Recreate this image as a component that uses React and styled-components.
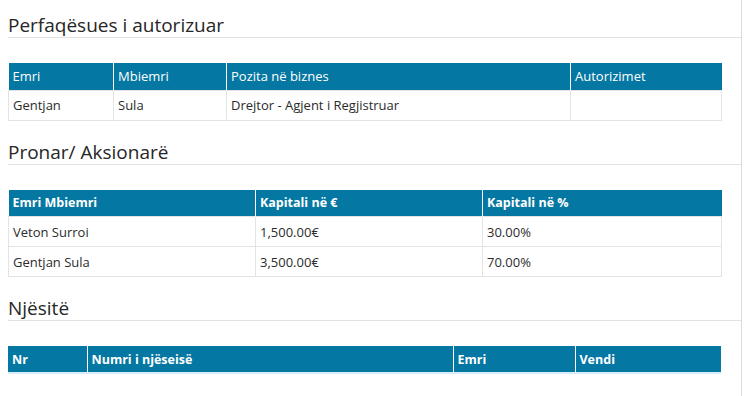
import React from 'react';
import styled, { createGlobalStyle } from 'styled-components';

const GlobalStyle = createGlobalStyle`
    html, body {
        margin: 0;
        padding: 0;
        background: #ffffff;
    }
    body {
        font-family: "Open Sans", "Noto Sans", sans-serif;
        color: #333333;
    }
`

const Page = styled.div`
    box-sizing: border-box;
    width: 742px;
    min-height: 100vh;
    padding: 13px 0 0 8px;
    border-right: 1px solid #dcdcdc;
`

const Section = styled.section`
    margin-bottom: 19px;
`

const Title = styled.h3`
    box-sizing: border-box;
    height: 25px;
    margin: 0 0 25px 0;
    font-size: 19px;
    font-weight: 400;
    line-height: 24px;
    color: #262626;
    border-bottom: 1px solid #e2e2e2;
`

const Table = styled.table`
    width: 713px;
    border-collapse: collapse;
    table-layout: fixed;
    font-size: 13px;
`

const HeadRow = styled.tr`
    background: #0477a2;
    border-bottom: ${p => (p.$underline ? '2px solid #d9eef8' : 'none')};
`

const Th = styled.th`
    height: 27px;
    padding: 0 4px;
    text-align: left;
    color: #ffffff;
    font-size: ${p => (p.$bold ? '12.5px' : '13px')};
    font-weight: ${p => (p.$bold ? 700 : 400)};
    border-right: 1px solid #ffffff;
    box-sizing: border-box;

    &:last-child {
        border-right: none;
    }
`

const Td = styled.td`
    height: 30px;
    padding: 0 4px;
    border: 1px solid #e3e3e3;
    color: #2b2b2b;
    box-sizing: border-box;
`

const sections = [
    {
        title: 'Perfaqësues i autorizuar',
        bold: false,
        cols: [
            ['Emri', 105],
            ['Mbiemri', 113],
            ['Pozita në biznes', 344],
            ['Autorizimet', 151],
        ],
        rows: [['Gentjan', 'Sula', 'Drejtor - Agjent i Regjistruar', '']],
    },
    {
        title: 'Pronar/ Aksionarë',
        bold: true,
        cols: [
            ['Emri Mbiemri', 247],
            ['Kapitali në €', 227],
            ['Kapitali në %', 239],
        ],
        rows: [
            ['Veton Surroi', '1,500.00€', '30.00%'],
            ['Gentjan Sula', '3,500.00€', '70.00%'],
        ],
    },
    {
        title: 'Njësitë',
        bold: true,
        underline: true,
        cols: [
            ['Nr', 79],
            ['Numri i njëseisë', 366],
            ['Emri', 122],
            ['Vendi', 146],
        ],
        rows: [],
    },
]

const App = () => (
    <Page>
        <GlobalStyle />
        {sections.map(({ title, bold, underline, cols, rows }) => (
            <Section key={title}>
                <Title>{title}</Title>
                <Table>
                    <colgroup>
                        {cols.map(([name, w]) => <col key={name} style={{ width: w }} />)}
                    </colgroup>
                    <thead>
                        <HeadRow $underline={underline}>
                            {cols.map(([name]) => <Th key={name} $bold={bold}>{name}</Th>)}
                        </HeadRow>
                    </thead>
                    <tbody>
                        {rows.map((row, i) => (
                            <tr key={i}>
                                {row.map((cell, j) => <Td key={j}>{cell}</Td>)}
                            </tr>
                        ))}
                    </tbody>
                </Table>
            </Section>
        ))}
    </Page>
)

export default App;
